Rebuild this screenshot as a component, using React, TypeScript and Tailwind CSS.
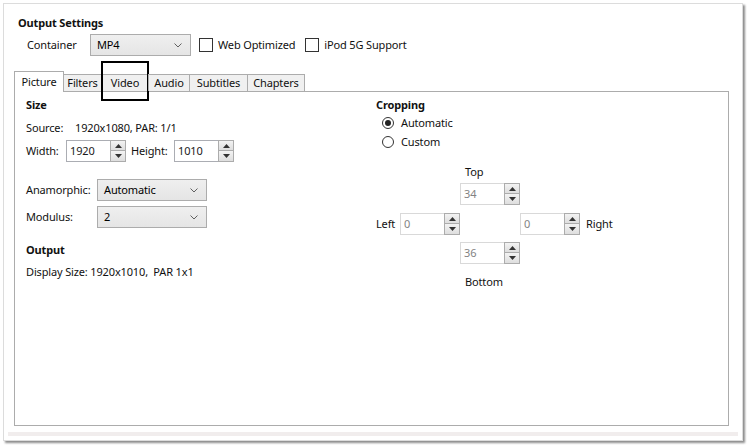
import React from "react";

const tabs = [
  { label: "Picture", w: "w-[50px]" },
  { label: "Filters", w: "w-[39px]" },
  { label: "Video", w: "w-[48px]" },
  { label: "Audio", w: "w-[42px]" },
  { label: "Subtitles", w: "w-[59px]" },
  { label: "Chapters", w: "w-[58px]" },
];

function Chevron() {
  return (
    <svg width="8" height="5" viewBox="0 0 8 5" className="shrink-0">
      <path d="M0.5 0.5 L4 4 L7.5 0.5" fill="none" stroke="#606060" strokeWidth="1" />
    </svg>
  );
}

function Select({ value, width }: { value: string; width: string }) {
  return (
    <div
      className={`${width} h-[22px] flex items-center justify-between pl-[6px] pr-[8px] border border-[#acacac] bg-gradient-to-b from-[#efefef] to-[#e5e5e5] text-black`}
    >
      <span>{value}</span>
      <Chevron />
    </div>
  );
}

function Arrow({ up }: { up?: boolean }) {
  return (
    <svg width="7" height="4" viewBox="0 0 7 4">
      <path d={up ? "M0 4 L3.5 0 L7 4 Z" : "M0 0 L3.5 4 L7 0 Z"} fill="#333" />
    </svg>
  );
}

function Spinner({ value, disabled }: { value: string; disabled?: boolean }) {
  return (
    <div className="flex h-[22px]">
      <div
        className={`w-[45px] h-full flex items-center pl-[3px] border bg-white ${
          disabled ? "border-[#d9d9d9] text-[#838383]" : "border-[#abadb3] text-[#1a1a1a]"
        }`}
      >
        {value}
      </div>
      <div className="w-[16px] h-full flex flex-col -ml-px">
        <div className="h-[11px] flex items-center justify-center border border-[#acacac] bg-gradient-to-b from-[#f3f3f3] to-[#dedede]">
          <Arrow up />
        </div>
        <div className="h-[12px] -mt-px flex items-center justify-center border border-[#acacac] bg-gradient-to-b from-[#f3f3f3] to-[#dedede]">
          <Arrow />
        </div>
      </div>
    </div>
  );
}

function Checkbox({ label }: { label: string }) {
  return (
    <div className="flex items-center gap-[5px]">
      <div className="w-[14px] h-[14px] border border-[#333] bg-white" />
      <span>{label}</span>
    </div>
  );
}

function Radio({ label, checked }: { label: string; checked?: boolean }) {
  return (
    <div className="flex items-center h-4 gap-[7px] ml-[6px]">
      <div className="w-[12px] h-[12px] rounded-full border border-[#333] bg-white flex items-center justify-center">
        {checked && <div className="w-[6px] h-[6px] rounded-full bg-[#222]" />}
      </div>
      <span>{label}</span>
    </div>
  );
}

export default function App() {
  return (
    <div
      className="w-[748px] h-[447px] bg-white pl-[3px] pt-[3px] text-[11px] tracking-[-0.15px] leading-4 text-[#111]"
      style={{ fontFamily: '"Noto Sans", "Open Sans", sans-serif' }}
    >
      <div className="w-[740px] h-[438px] border border-[#dcdcdc] bg-white shadow-[2px_2px_2px_rgba(0,0,0,0.45)] px-[10px] pt-[11px]">
        {/* Output settings */}
        <div className="pl-[4px] font-bold h-4">Output Settings</div>
        <div className="flex items-center mt-[3px] pl-[13px]">
          <span className="w-[63px]">Container</span>
          <Select value="MP4" width="w-[101px]" />
          <div className="ml-[8px]">
            <Checkbox label="Web Optimized" />
          </div>
          <div className="ml-[10px]">
            <Checkbox label="iPod 5G Support" />
          </div>
        </div>

        {/* Tabs */}
        <div className="flex items-end h-[20px] mt-[15px]">
          {tabs.map((t, i) =>
            i === 0 ? (
              <div
                key={t.label}
                className={`${t.w} relative z-10 h-[21px] -mb-px flex items-center justify-center border border-b-0 border-[#acacac] bg-white`}
              >
                {t.label}
              </div>
            ) : (
              <div
                key={t.label}
                className={`${t.w} relative h-[17px] -ml-px flex items-center justify-center border border-b-0 border-[#acacac] bg-[#f0f0f0]`}
              >
                {t.label}
                {t.label === "Video" && (
                  <div className="absolute -top-[14px] -left-px w-[48px] h-[40px] border-2 border-black" />
                )}
              </div>
            )
          )}
        </div>

        {/* Panel */}
        <div className="w-[715px] h-[335px] border border-[#acacac] flex">
          <div className="w-[361px] pl-[11px] pt-[5px]">
            <div className="font-bold h-4">Size</div>
            <div className="flex mt-[7px] h-4">
              <span className="w-[49px]">Source:</span>
              <span>1920x1080, PAR: 1/1</span>
            </div>
            <div className="flex items-center mt-[4px]">
              <span className="w-[40px]">Width:</span>
              <Spinner value="1920" />
              <span className="w-[43px] ml-[5px]">Height:</span>
              <Spinner value="1010" />
            </div>
            <div className="flex items-center mt-[17px]">
              <span className="w-[71px]">Anamorphic:</span>
              <Select value="Automatic" width="w-[110px]" />
            </div>
            <div className="flex items-center mt-[5px]">
              <span className="w-[71px]">Modulus:</span>
              <Select value="2" width="w-[110px]" />
            </div>
            <div className="font-bold h-4 mt-[14px]">Output</div>
            <div className="h-4 mt-[6px]">Display Size: 1920x1010,&nbsp; PAR 1x1</div>
          </div>

          <div className="pt-[5px]">
            <div className="font-bold h-4">Cropping</div>
            <div className="mt-[2px]">
              <Radio label="Automatic" checked />
            </div>
            <div className="mt-[3px]">
              <Radio label="Custom" />
            </div>
            <div className="h-4 mt-[14px] ml-[89px]">Top</div>
            <div className="mt-[3px] ml-[84px]">
              <Spinner value="34" disabled />
            </div>
            <div className="flex items-center mt-[8px]">
              <span className="w-[24px]">Left</span>
              <Spinner value="0" disabled />
              <div className="w-[60px]" />
              <Spinner value="0" disabled />
              <span className="ml-[6px]">Right</span>
            </div>
            <div className="mt-[7px] ml-[84px]">
              <Spinner value="36" disabled />
            </div>
            <div className="h-4 mt-[10px] ml-[89px]">Bottom</div>
          </div>
        </div>

        <div className="-ml-[6px] mt-[6px] w-[730px] h-[4px] bg-[#f1eded]" />
      </div>
    </div>
  );
}
